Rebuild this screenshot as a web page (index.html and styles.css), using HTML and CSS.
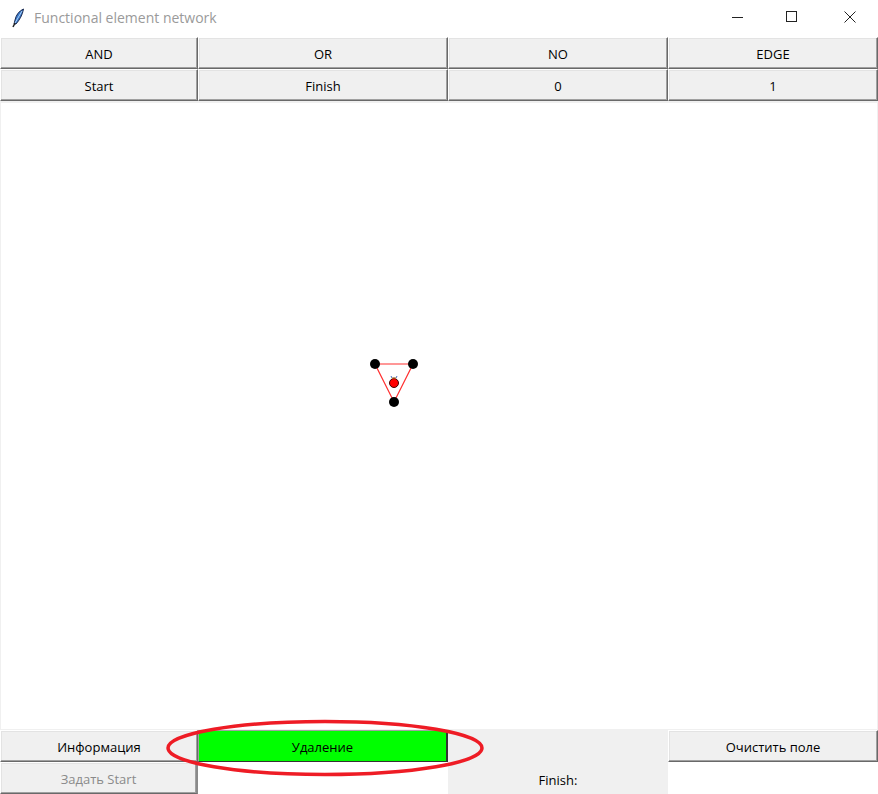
FILE: index.html
```html
<!DOCTYPE html>
<html>
<head>
<meta charset="utf-8">
<link rel="stylesheet" href="styles.css">
</head>
<body>
<div class="window">
  <div class="titlebar">
    <svg class="feather" width="14" height="20" viewBox="0 0 14 20">
      <path d="M12.5 1 C8 3 5 7 4 12 L3 16 L5 16 C8.5 12 11.5 7 12.5 1 Z" fill="#3a78c8" stroke="#1a2a50" stroke-width="1"/>
      <path d="M11 3 L4 15" stroke="#a8d0f8" stroke-width="1"/>
      <path d="M4 15 L2 19" stroke="#222" stroke-width="1.5"/>
    </svg>
    <span class="title">Functional element network</span>
    <div class="controls">
      <svg width="46" height="36" viewBox="0 0 46 36"><line x1="16" y1="18.5" x2="27" y2="18.5" stroke="#222" stroke-width="1"/></svg>
      <svg width="58" height="36" viewBox="0 0 58 36"><rect x="24.5" y="12.5" width="10" height="10" fill="none" stroke="#222" stroke-width="1"/></svg>
      <svg width="58" height="36" viewBox="0 0 58 36"><path d="M24.5 12.5 L35.5 23.5 M35.5 12.5 L24.5 23.5" stroke="#222" stroke-width="1"/></svg>
    </div>
  </div>
  <div class="toolbar">
    <div class="btn">AND</div>
    <div class="btn">OR</div>
    <div class="btn">NO</div>
    <div class="btn">EDGE</div>
    <div class="btn">Start</div>
    <div class="btn">Finish</div>
    <div class="btn">0</div>
    <div class="btn">1</div>
  </div>
  <div class="canvas">
    <svg class="graph" width="60" height="60" viewBox="0 0 60 60">
      <polygon points="14,13 52,13 33,51" fill="none" stroke="#ff3030" stroke-width="1.2"/>
      <circle cx="14" cy="13" r="5" fill="#000"/>
      <circle cx="52" cy="13" r="5" fill="#000"/>
      <circle cx="33" cy="51" r="5" fill="#000"/>
      <circle cx="33" cy="32" r="4.5" fill="#ff0000" stroke="#400" stroke-width="1"/>
      <path d="M30 25 L31 27 M36 25 L35 27 M33 26 L33 27" stroke="#4a70c0" stroke-width="1"/>
      <path d="M31 27 L35 27" stroke="#d08020" stroke-width="1"/>
    </svg>
  </div>
  <div class="bottombar">
    <div class="btn">Информация</div>
    <div class="btn green">Удаление</div>
    <div class="blank"></div>
    <div class="btn">Очистить поле</div>
    <div class="btn disabled">Задать Start</div>
    <div class="entry"></div>
    <div class="label">Finish:</div>
    <div class="entry"></div>
  </div>
  <svg class="highlight" width="324" height="62" viewBox="0 0 324 62">
    <ellipse cx="162" cy="31" rx="157" ry="26.5" fill="none" stroke="#ee1c25" stroke-width="3.5"/>
  </svg>
</div>
</body>
</html>
```

FILE: styles.css
```css
* { box-sizing: border-box; }
html, body { margin: 0; padding: 0; }
body {
  width: 878px;
  height: 794px;
  overflow: hidden;
  background: #fff;
  font-family: "Open Sans", "Noto Sans", "Liberation Sans", sans-serif;
  font-size: 13px;
  color: #000;
}
.window {
  position: relative;
  width: 878px;
  height: 794px;
  display: flex;
  flex-direction: column;
}
.titlebar {
  height: 37px;
  display: flex;
  align-items: center;
  background: #fff;
  flex: none;
}
.feather { margin-left: 11px; margin-top: -1px; }
.title {
  margin-left: 9px;
  font-family: "Open Sans", "Noto Sans", sans-serif;
  font-size: 14px;
  color: #9a9a9a;
  margin-top: -3px;
}
.controls {
  margin-left: auto;
  display: flex;
  align-self: flex-start;
  margin-right: 0;
  margin-top: -1px;
}
.controls svg { display: block; }
.toolbar, .bottombar {
  display: grid;
  grid-template-columns: 198px 250px 220px 210px;
  grid-template-rows: 32px 32px;
  flex: none;
}
.btn {
  background: #f0f0f0;
  border-top: 1px solid #ffffff;
  border-left: 1px solid #ffffff;
  border-right: 1px solid #696969;
  border-bottom: 1px solid #696969;
  box-shadow: inset -1px -1px 0 #a0a0a0, inset 1px 1px 0 #e3e3e3;
  display: flex;
  align-items: center;
  justify-content: center;
  padding-top: 1px;
}
.btn.disabled { color: #8a8a8a; }
.btn.green {
  background: #00ff00;
  border-top: 1px solid #a0a0a0;
  border-left: 1px solid #a0a0a0;
  border-right: 2px solid #333;
  border-bottom: 1px solid #333;
  box-shadow: none;
}
.blank { background: #f0f0f0; }
.label {
  background: #f0f0f0;
  display: flex;
  align-items: center;
  justify-content: center;
  padding-top: 4px;
}
.entry { background: #fff; }
.bottombar .btn:nth-child(5) { border-right: 2px solid #8a8a8a; }
.canvas {
  flex: 1;
  position: relative;
  background: #fff;
  border: 1px solid #f0f0f0;
  border-top: 2px solid #f0f0f0;
}
.graph {
  position: absolute;
  left: 360px;
  top: 248px;
}
.highlight {
  position: absolute;
  left: 163px;
  top: 717px;
}
```
